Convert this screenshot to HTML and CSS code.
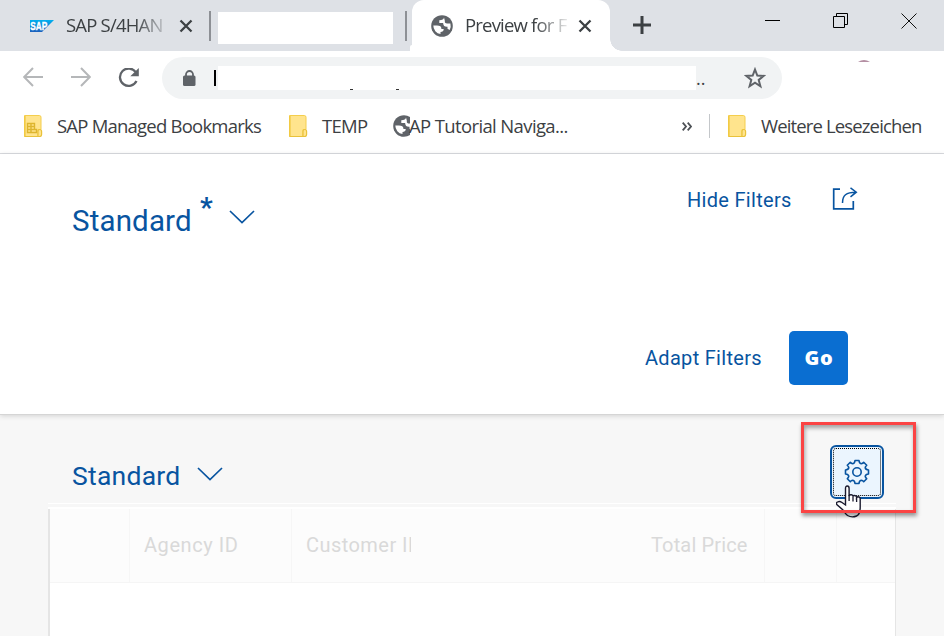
FILE: index.html
```html
<!DOCTYPE html>
<html lang="en">
<head>
<meta charset="utf-8">
<title>Preview</title>
<link rel="stylesheet" href="styles.css">
</head>
<body>
<svg width="0" height="0" class="defs">
  <defs>
    <linearGradient id="sapblue" x1="0" y1="0" x2="0" y2="1"><stop offset="0" stop-color="#00b0f0"/><stop offset="1" stop-color="#1c60bd"/></linearGradient>
    <symbol id="globe" viewBox="0 0 22 22"><circle cx="11" cy="11" r="10.8" fill="#5f6368"/><path d="M2.3 10.6h3.600c3.200 0 4.700 1.200 4.500 3.300h2.300c.2 2.200-1.300 2.700-3.200 3.100v2.100A8.600 8.600 0 0 1 2.300 10.600zM13 2.600c-.2 2.200-1.800 2.500-4.700 2.600v2.700h3.800c.3 2.900 1.500 4 4.400 3.800v2.100l2.200 1.100a8.700 8.700 0 0 0 .7-6.300h-3.200c-1.900-.3-2.800-1.200-2.300-2.700z" fill="#fff"/></symbol>
    <symbol id="folder" viewBox="0 0 19 22"><path d="M.5.500h14.800q1.700 0 1.700 1.700v12.300h-3v7H.5z" fill="#ffe48d" stroke="#f4ce4d"/><path d="M1 1v20" stroke="#f0c83e" stroke-width="1.200"/><path d="M14 21.500v-5q0-2 1.800-2t1.800 2v3q0 2-2 2H.5" fill="#ffe48d" stroke="#e9c23b" stroke-width="1.200"/></symbol>
    <symbol id="cross" viewBox="0 0 14 14"><path d="M1.500 1.500l11 11m0-11l-11 11" stroke="#3c4043" stroke-width="2.300"/></symbol>
    <symbol id="chevron" viewBox="0 0 26 14"><path d="M1 1l12 11.500L25 1" fill="none" stroke="#0854a0" stroke-width="1.700"/></symbol>
  </defs>
</svg>
<header class="browser">
  <div class="tabs">
    <div class="tab first">
      <svg class="sap" width="24" height="12" viewBox="0 0 24 12"><path d="M0 0h24L12 12H0z" fill="url(#sapblue)"/><text x="0.300" y="9.500" textLength="17" lengthAdjust="spacingAndGlyphs">SAP</text></svg>
      <span class="tab-title">SAP S/4HAN</span>
      <svg width="14" height="14"><use href="#cross"/></svg>
    </div>
    <div class="tab blank"><span></span></div>
    <div class="tab active">
      <svg width="22" height="22"><use href="#globe"/></svg>
      <span class="tab-title">Preview for F</span>
      <svg width="14" height="14"><use href="#cross"/></svg>
    </div>
    <svg class="plus" width="18" height="18"><path d="M9 0v18M0 9h18" stroke="#3c4043" stroke-width="3"/></svg>
    <div class="window-buttons">
      <svg width="15" height="16"><path d="M0 7.500h15" stroke="#000"/></svg>
      <svg width="16" height="16"><path d="M.5 3.500h11v11H.5zM3.500 3.500V.5h11v11h-3" fill="none" stroke="#000"/></svg>
      <svg width="16" height="16"><path d="M.5.500l15 15m0-15l-15 15" stroke="#111"/></svg>
    </div>
  </div>
  <div class="toolbar">
    <svg class="back" width="20" height="20"><path d="M20 10H1.500M10 1L1.200 10l8.800 9" fill="none" stroke="#b5b7b9" stroke-width="2"/></svg>
    <svg class="forward" width="20" height="20"><path d="M0 10h18.500M10 1l8.800 9-8.800 9" fill="none" stroke="#b5b7b9" stroke-width="2"/></svg>
    <svg class="reload" width="22" height="20"><path d="M17.800 4.200A8.700 8.700 0 1 0 18.500 13" fill="none" stroke="#5f6368" stroke-width="2.300"/><path d="M20.800 0v8.200h-8.500z" fill="#5f6368"/></svg>
    <div class="address">
      <svg width="13" height="16"><path d="M3 7V4.500a3.500 3.500 0 0 1 7 0V7" fill="none" stroke="#5f6368" stroke-width="1.800"/><rect y="5.500" width="12.500" height="10.500" rx="1.500" fill="#5f6368"/></svg>
      <i class="caret"></i>
      <span class="url"><i></i><i></i></span>
      <span class="dots">..</span>
      <svg class="star" width="22" height="22"><path d="M11 2.500l2.300 6 6.400.4-5 4 1.700 6.400-5.400-3.600-5.400 3.600 1.700-6.400-5-4 6.400-.4z" fill="none" stroke="#5f6368" stroke-width="2"/></svg>
    </div>
    <svg class="avatar" width="12" height="2"><path d="M0 1.500Q6-.5 12 1.500z" fill="#6b2048"/></svg>
  </div>
  <nav class="bookmarks">
    <svg width="19" height="22"><use href="#folder"/><path d="M3.500 17.500v-9h7v6h2v3zM3.500 11.500h7M3.500 14.500h7M7 8.500v9" fill="none" stroke="#ddb52f" stroke-width="1.400"/></svg>
    <span class="bm managed">SAP Managed Bookmarks</span>
    <svg width="19" height="22"><use href="#folder"/></svg>
    <span class="bm temp">TEMP</span>
    <span class="half-globe"><svg width="22" height="22"><use href="#globe"/></svg></span>
    <span class="bm tutorial">AP Tutorial Naviga...</span>
    <svg class="more" width="10" height="9"><path d="M.7.700l3.300 3.800L.7 8.300M5.700.700L9 4.500 5.700 8.300" fill="none" stroke="#4d5156" stroke-width="1.800"/></svg>
    <i class="divider"></i>
    <svg width="19" height="22"><use href="#folder"/></svg>
    <span class="bm others">Weitere Lesezeichen</span>
  </nav>
</header>
<section class="filters">
  <div class="title-row">
    <h1>Standard</h1><span class="asterisk">*</span>
    <svg class="chev" width="26" height="14"><use href="#chevron"/></svg>
    <span class="link hide">Hide Filters</span>
    <svg class="share" width="26" height="24"><path d="M8 2.200H1.700v19.600h19.600V14" fill="none" stroke="#0854a0" stroke-width="1.700"/><path d="M10.500 16C10.500 8.500 14 5.200 24 5.200M18.500.800l5.800 4.400-5.800 4.600" fill="none" stroke="#0854a0" stroke-width="1.500"/></svg>
  </div>
  <div class="action-row"><span class="link adapt">Adapt Filters</span><button class="go">Go</button></div>
</section>
<main>
  <div class="table-bar">
    <h2>Standard</h2>
    <svg class="chev" width="26" height="14"><use href="#chevron"/></svg>
    <div class="settings">
      <svg width="26" height="26" viewBox="-13 -13 26 26" fill="none" stroke="#0854a0" stroke-width="1.600"><circle r="4.200"/><path d="M-2-11.500H2Q2.200-8.700 4.200-8.200 5.800-8.400 6.700-9.700L9.700-6.700Q8.400-5.800 8.200-4.200 8.700-2.200 11.500-2V2Q8.700 2.200 8.200 4.200 8.400 5.800 9.700 6.700L6.700 9.700Q5.800 8.400 4.200 8.200 2.200 8.700 2 11.500H-2Q-2.200 8.700-4.200 8.200-5.800 8.400-6.700 9.700L-9.700 6.700Q-8.400 5.800-8.200 4.200-8.700 2.200-11.500 2V-2Q-8.700-2.200-8.200-4.200-8.400-5.800-9.700-6.700L-6.700-9.700Q-5.800-8.400-4.200-8.200-2.200-8.700-2-11.500z" stroke-linejoin="round"/></svg>
    </div>
  </div>
  <div class="table-top"></div>
  <div class="table">
    <div class="head">
      <div></div><div><span class="agency">Agency ID</span></div><div><span class="customer">Customer ID</span></div><div class="price-cell"><span class="price">Total Price</span></div><div></div><div></div>
    </div>
  </div>
</main>
<svg class="hand" width="27" height="34"><path d="M9.500 20V3.500Q9.500 1 11.300 1T13.100 3.500V11Q13.500 9.500 15.300 9.800T17 11.500Q17.700 10.200 19.200 10.700T20.600 12.500Q21.500 11.300 23 12T24.200 14V22Q24.200 29.500 20.500 31Q16 33 11.500 30.500Q9.500 29 7 25L.8 19.500Q-.2 17.500 1.800 16.800Q3.800 16 6 17.500L9.500 20Z" fill="#fff" stroke="#1a1a2e" stroke-width="1.400"/><path d="M13.100 10v6M17 11.500V16.500M20.600 12.500V17" stroke="#1a1a2e" stroke-width="1.300"/></svg>
<div class="highlight"></div>
</body>
</html>
```
FILE: styles.css
```css
* { box-sizing: border-box; }
body { margin: 0; width: 944px; height: 636px; overflow: hidden; position: relative; background: #f7f7f7; font-family: Roboto, "Liberation Sans", sans-serif; color: #0854a0; }
svg { display: block; flex: none; }
.defs { position: absolute; }
span, h1, h2 { white-space: nowrap; flex: none; }
i { display: block; flex: none; }

.browser { height: 154px; background: #fff; border-bottom: 1px solid #dadce0; font-family: "Open Sans", "Noto Sans", sans-serif; color: #3c4043; }
.tabs { height: 51px; display: flex; align-items: center; background: #dee1e6; }
.tab { height: 51px; display: flex; align-items: center; flex: none; }
.first { width: 218px; padding-left: 30px; background: linear-gradient(#8d9095, #8d9095) 209px 11px / 2px 30px no-repeat; }
.sap text { font: 900 11px "Liberation Sans", sans-serif; fill: #fff; stroke: #fff; stroke-width: .4px; }
.tab-title { overflow: hidden; font-size: 18.500px; line-height: 26px; padding-bottom: 2px; color: #3c4043; -webkit-mask-image: linear-gradient(90deg, #000 68%, transparent 105%); mask-image: linear-gradient(90deg, #000 68%, transparent 105%); }
.first .tab-title { width: 101px; margin: 0 12px 0 12px; letter-spacing: -.8px; }
.blank { width: 194px; background: linear-gradient(#8d9095, #8d9095) 187px 11px / 2px 30px no-repeat; }
.blank span { width: 175px; height: 32px; background: #fff; margin-top: 5px; }
.active { width: 198px; padding-left: 19px; background: #fff; border-radius: 12px 12px 0 0; position: relative; }
.active::before, .active::after { content: ""; position: absolute; bottom: 0; }
.active::before { left: -2px; width: 2px; height: 6px; background: #fff; border-radius: 2px 0 0 0; }
.active::after { right: -12px; width: 12px; height: 12px; background: radial-gradient(circle at 100% 0, transparent 11.500px, #fff 12px); }
.active .tab-title { width: 102px; margin: 0 11px 0 12px; letter-spacing: -.8px; }
.plus { margin: -2px 0 0 23px; }
.window-buttons { display: flex; margin: -9px 27px 0 auto; gap: 52.500px; }

.toolbar { height: 51px; display: flex; align-items: center; padding-left: 23px; }
.back { margin-top: 1px; }
.forward { margin: 1px 0 0 28px; }
.reload { margin: 3px 0 0 27px; }
.address { width: 620px; height: 42px; margin: 3px 0 0 22px; border-radius: 21px; background: #f1f3f4; display: flex; align-items: center; padding-left: 21px; }
.caret { width: 2px; height: 16px; margin-left: 18px; background: #000; }
.url { display: flex; align-items: flex-end; gap: 43px; width: 478px; height: 24px; margin-left: 2px; padding-left: 132px; background: #fff; }
.url i { width: 3px; height: 1px; background: #333; }
.dots { width: 14px; font-size: 18px; line-height: 24px; padding-bottom: 0; }
.star { margin-left: 34px; }
.avatar { margin: -31px 0 0 76px; }

.bookmarks { height: 48px; display: flex; align-items: center; padding-left: 24px; }
.bm { font-size: 18.500px; line-height: 26px; }
.managed { width: 204px; margin: 0 28px 0 14px; letter-spacing: -.78px; }
.temp { width: 46px; margin: 0 25px 0 14px; letter-spacing: -.7px; }
.half-globe { width: 17px; overflow: hidden; }
.tutorial { width: 158px; margin-left: -1px; letter-spacing: -.63px; }
.more { margin: 0 17px 0 115px; }
.divider { width: 1px; height: 24px; background: #c4c7ca; margin-right: 18px; }
.others { margin-left: 14px; letter-spacing: -.86px; }

.filters { height: 261px; background: #fff; border-bottom: 1px solid #d5d5d5; box-shadow: 0 1px 5px rgba(0,0,0,.15); position: relative; }
.title-row { display: flex; height: 177px; padding-left: 72px; align-items: flex-start; }
h1, h2 { margin: 0; font-weight: 400; }
h1 { width: 120px; font-size: 29.500px; line-height: 36px; margin-top: 49px; letter-spacing: .15px; }
.asterisk { width: 13px; font-size: 28px; font-weight: 700; line-height: 30px; margin: 39px 18px 0 8px; }
.title-row .chev { margin: 56px 0 0 -2px; }
.link { font-size: 20px; line-height: 26px; letter-spacing: .3px; }
.hide { width: 105px; margin: 33px 0 0 432px; }
.share { margin: 33px 0 0 40px; }
.action-row { display: flex; align-items: center; padding-left: 645px; }
.adapt { width: 117px; margin-right: 27px; }
.go { width: 59px; height: 54px; border: 0; border-radius: 5px; background: #0a6ed1; color: #fff; font: 800 20px "Open Sans", sans-serif; letter-spacing: .8px; padding: 0 0 2px 1px; }

main { height: 221px; padding: 31px 48px 0; }
.table-bar { height: 57px; display: flex; align-items: flex-start; padding-left: 24px; }
h2 { width: 110px; font-size: 26.500px; line-height: 32px; margin-top: 14px; letter-spacing: .25px; }
.table-bar .chev { margin: 21px 0 0 15px; }
.settings { width: 54px; height: 54px; margin: -1px 0 0 607px; border: 2px solid #0854a0; border-radius: 6px; background: #ebf5fe; display: flex; align-items: center; justify-content: center; outline: 1px dotted #000; outline-offset: -4px; }
.table-top { height: 6px; border-top: 1px solid #fff; border-bottom: 2px solid #fff; }
.table { height: 132px; background: #fff; border: solid #e5e5e5; border-width: 0 1px 0 2px; }
.head { height: 74px; display: grid; grid-template-columns: 80px 162px 358px 115px 72px 1fr; background: #fcfcfc; border-bottom: 1px solid #f5f5f5; color: #d9d9d9; }
.head > div { display: flex; align-items: center; border-right: 1px solid #f6f6f6; padding: 0 0 2px 14px; }
.head > div:nth-child(3) { border-right: 0; }
.head > div:last-child { border: 0; }
.head .price-cell { padding-left: 1px; }
.head span { font-size: 20px; line-height: 28px; letter-spacing: .45px; }
.head .price { letter-spacing: .15px; }
.head .agency { letter-spacing: .55px; }
.customer { width: 105px; overflow: hidden; }

.hand { position: absolute; left: 836px; top: 485px; }
.highlight { position: absolute; left: 801px; top: 422px; width: 115px; height: 91px; border: 3px solid #fb4444; box-shadow: 1px 3px 4px rgba(0,0,0,.4), inset 1px 3px 4px rgba(0,0,0,.35); }
```
